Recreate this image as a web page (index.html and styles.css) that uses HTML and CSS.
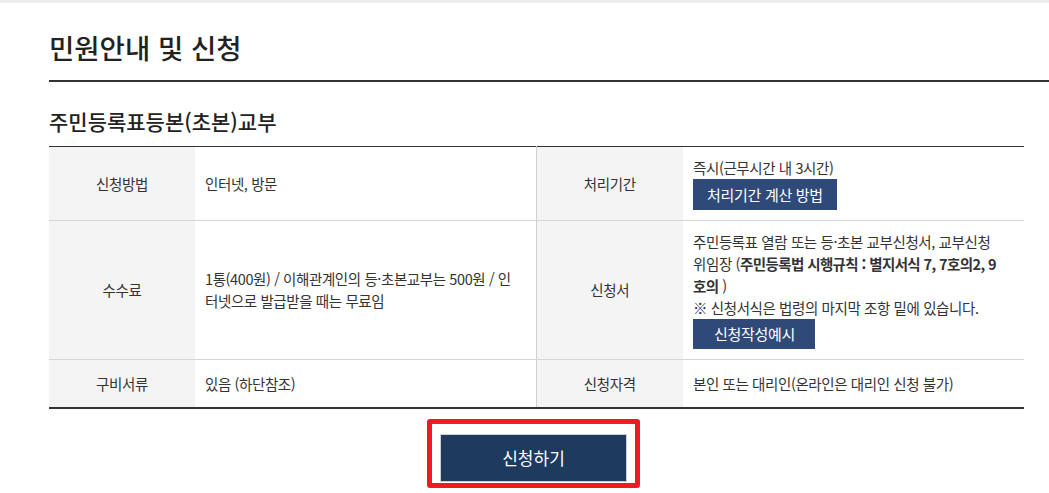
FILE: index.html
```html
<!DOCTYPE html>
<html lang="ko">
	<head>
		<meta charset="UTF-8" />
		<title>민원안내 및 신청</title>
		<link rel="stylesheet" href="styles.css">
	</head>
	<body>
		<div class="top-strip"></div>
		<div class="page">
			<h1 class="page-title">민원안내 및 신청</h1>
			<h2 class="sub-title">주민등록표등본(초본)교부</h2>

			<table class="info">
				<colgroup>
					<col class="col-th">
					<col class="col-td">
					<col class="col-th2">
					<col class="col-td">
				</colgroup>
				<tr>
					<th>신청방법</th>
					<td>인터넷, 방문</td>
					<th class="split">처리기간</th>
					<td>
						즉시(근무시간 내 3시간)
						<a class="btn-small">처리기간 계산 방법</a>
					</td>
				</tr>
				<tr>
					<th>수수료</th>
					<td class="nowrap">1통(400원) / 이해관계인의 등·초본교부는 500원 / 인<br>터넷으로 발급받을 때는 무료임</td>
					<th class="split">신청서</th>
					<td class="nowrap">
						주민등록표 열람 또는 등·초본 교부신청서, 교부신청<br>위임장 (<b>주민등록법 시행규칙 : 별지서식 7, 7호의2, 9<br>호의</b> )<br>
						※ 신청서식은 법령의 마지막 조항 밑에 있습니다.
						<a class="btn-small btn-wide">신청작성예시</a>
					</td>
				</tr>
				<tr>
					<th>구비서류</th>
					<td>있음 (하단참조)</td>
					<th class="split">신청자격</th>
					<td>본인 또는 대리인(온라인은 대리인 신청 불가)</td>
				</tr>
			</table>

			<div class="apply-row">
				<div class="apply-mark">
					<a class="btn-apply">신청하기</a>
				</div>
			</div>
		</div>
	</body>
</html>
```

FILE: styles.css
```css
body {
	margin: 0;
	font-family: "Noto Sans CJK KR", "Noto Sans", sans-serif;
	color: #333;
	background: #fff;
}
.top-strip {
	height: 3px;
	background-color: #ececec;
}
.page {
	padding-left: 49px;
}
.page-title {
	margin: 0;
	padding: 27px 0 16px;
	font-size: 27.5px;
	line-height: 34px;
	font-weight: 500;
	color: #222;
	border-bottom: 2px solid #333;
}
.sub-title {
	margin: 24px 0 10px;
	font-size: 21px;
	line-height: 30px;
	font-weight: 500;
	color: #222;
}
.info {
	width: 975px;
	table-layout: fixed;
	border-collapse: collapse;
	border-top: 1px solid #333;
	border-bottom: 2px solid #333;
	font-size: 14.5px;
	line-height: 22px;
	letter-spacing: -0.4px;
}
.col-th {
	width: 146px;
}
.col-th2 {
	width: 147px;
}
.info th,
.info td {
	height: 27px;
	padding: 10px;
	border-bottom: 1px solid #d6d6d6;
	vertical-align: middle;
}
.info tr:last-child th,
.info tr:last-child td {
	border-bottom: none;
}
.info th {
	background-color: #f4f4f4;
	font-weight: normal;
	text-align: center;
}
.info td {
	text-align: left;
	padding-left: 10px;
}
.info td.nowrap {
	white-space: nowrap;
}
.info th.split {
	border-left: 1px solid #d0d0d0;
}
.info b {
	font-weight: 700;
	letter-spacing: -0.6px;
}
.btn-small {
	display: block;
	width: fit-content;
	height: 31px;
	line-height: 31px;
	padding: 0 14px;
	background-color: #2f4a79;
	color: #fff;
	font-size: 15px;
	letter-spacing: -0.3px;
}
.btn-wide {
	height: 30px;
	line-height: 30px;
	padding: 0 20px 0 21px;
}
.apply-row {
	width: 969px;
	display: flex;
	justify-content: center;
	margin-top: 10px;
}
.apply-mark {
	border: 5px solid #ec1c24;
	border-radius: 3px;
	padding: 10px 8px 1px;
}
.btn-apply {
	display: block;
	width: 185px;
	height: 46px;
	line-height: 46px;
	text-align: center;
	background-color: #1e3a5f;
	border: 1px solid #cfcfcf;
	color: #fff;
	font-size: 17px;
}
```
